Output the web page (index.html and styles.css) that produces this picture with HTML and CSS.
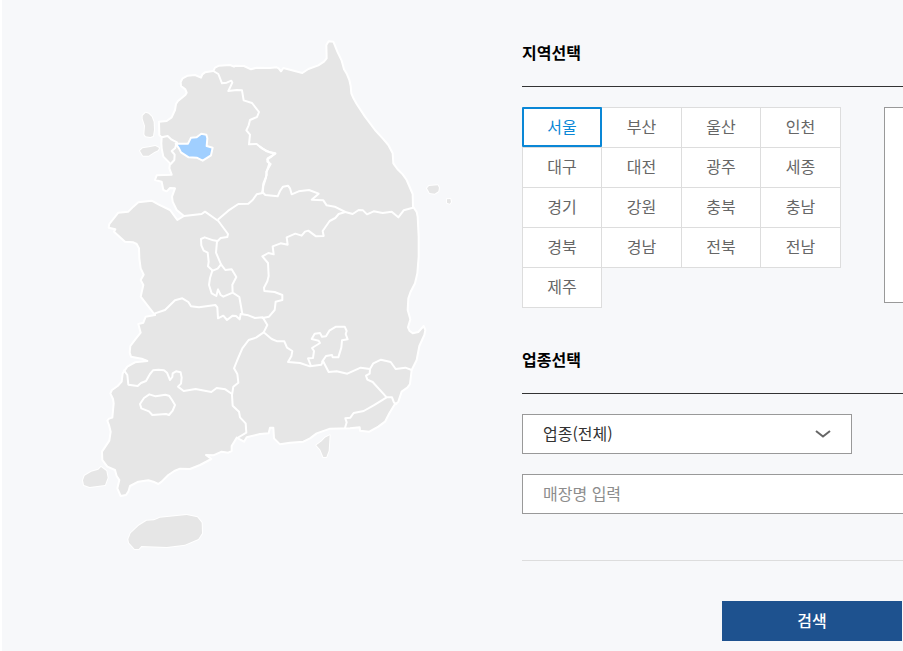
FILE: index.html
```html
<!DOCTYPE html>
<html lang="ko">
<head>
<meta charset="utf-8">
<title>매장 검색</title>
<link rel="stylesheet" href="styles.css">
</head>
<body>
<main class="finder">
  <div class="map">
    <svg class="map-art" viewBox="240 114 1122 1542" aria-hidden="true">
      <g class="land">
        <path d="M477 365L500 363L515 352L525 330L528 312L534 303L556 285L560 278L556 268L543 258L542 246L548 235L563 227L585 225L603 233L607 223L615 217L640 213L645 203L657 197L690 195L702 200L707 197L732 198L753 208L770 203L810 204L830 202L836 205L843 214L850 204L907 219L925 207L955 196L972 185L980 175L979 135L986 124L1000 125L1012 155L1025 182L1032 208L1041 223L1048 240L1052 258L1054 280L1060 294L1070 312L1095 350L1125 390L1148 415L1165 435L1178 460L1180 490L1192 507L1208 523L1220 540L1238 582L1239 620L1250 636L1253 650L1256 710L1256 770L1252 820L1245 850L1232 875L1225 895L1223 930L1231 958L1224 982L1229 993L1238 1000L1255 996L1271 978L1276 990L1273 1005L1258 1038L1250 1080L1235 1110L1230 1152L1222 1163L1205 1175L1195 1205L1183 1215L1168 1240L1155 1265L1135 1280L1108 1295L1080 1292L1079 1282L1050 1285L990 1286L950 1300L930 1315L910 1325L870 1328L840 1333L822 1315L820 1283L810 1283L806 1300L780 1302L740 1312L732 1325L710 1313L695 1338L695 1353L685 1358L665 1355L640 1366L618 1365L634 1377L600 1395L570 1407L540 1406L523 1413L505 1425L485 1445L475 1452L460 1445L445 1441L415 1445L390 1458L385 1475L378 1485L362 1488L352 1465L358 1440L350 1428L345 1410L322 1400L307 1380L306 1355L328 1322L332 1295L327 1275L322 1262L327 1256L337 1253L341 1210L339 1197L331 1180L336 1170L353 1158L365 1145L368 1120L382 1100L405 1087L442 1083L425 1076L393 1070L389 1058L391 1038L406 1018L422 998L415 972L430 968L437 950L465 945L422 890L430 855L422 840L431 824L422 805L418 775L417 745L410 732L400 727L375 725L342 695L346 688L326 683L328 672L355 638L385 635L400 620L415 607L455 602L475 613L510 630L532 660L552 648L530 630L518 605L516 590L525 565L510 564L500 574L490 570L485 545L465 540L470 526L515 524L508 505L510 490L490 470L485 445L484 430L485 412L478 405Z"/>
      </g>
      <g class="land islands">
        <path d="M437 338L446 341L455 350L461 366L462 390L459 408L451 411L437 409L433 403L435 377L428 356L428 347Z"/>
        <path d="M420 452L428 445L447 442L466 438L477 444L474 451L463 456L446 467L429 467Z"/>
        <path d="M303 1401L295 1409L274 1415L254 1427L249 1441L252 1455L269 1461L315 1455L323 1433L319 1413Z"/>
        <path d="M387 1628L385 1618L392 1600L416 1577L440 1562L462 1561L480 1553L560 1545L592 1552L605 1568L606 1600L595 1617L555 1634L500 1641L424 1638L416 1647L404 1647Z"/>
        <path d="M989 1306L975 1313L965 1324L949 1336L961 1349L970 1371L979 1371L986 1352Z"/>
        <path d="M1281 565L1287 558L1313 556L1317 563L1315 574L1304 581L1289 579Z"/>
        <path d="M1341 598L1351 597L1353 606L1349 611L1341 608Z"/>
      </g>
      <path class="seoul" d="M527 431L564 431L573 413L590 412L604 401L619 404L622 415L620 438L638 443L633 466L608 482L590 473L566 472L543 457L537 445Z"/>
      <g class="borders">
        <g transform="translate(210 90)">
          <path d="M430 123L445 132L456 160L470 158L484 152L487 158L475 183L500 180L516 181L521 211L546 219L567 246L561 261L540 270L536 286L529 301L540 314L537 343L560 342L577 356L600 367M600 367L616 370L603 381L592 388L598 401L590 425L588 443L580 468L578 489L560 493L548 510L535 521L505 522L475 542L445 568"/>
          <path d="M275 322L293 318L305 329L321 337L315 355L305 363L314 374L313 390L302 402"/>
        </g>
        <g transform="translate(210 570)">
          <path d="M342 78L395 72L405 65L445 93L474 132L472 141L452 144L443 153L430 151L404 142L393 147L394 166L401 182L413 188L416 215L414 229L428 242L443 236L453 223L438 188L441 154"/>
          <path d="M453 223L466 240L485 238L499 261L487 284L488 308L460 320L452 315L444 298L439 318L425 310L417 285L420 264L427 242M488 308L508 321L517 372"/>
          <path d="M255 375V370L285 360L315 331L337 325L355 336L363 349L387 352L436 345L442 352L444 385L460 377L471 390L488 377L498 378L509 388L512 372L535 376L555 384L578 382L592 405L581 427"/>
          <path d="M581 427L558 443L536 450L517 475L502 510L492 535L502 552L505 578L490 590L486 615L488 647L507 665L510 682L527 700L529 728L502 744"/>
          <path d="M162 541L172 555L175 584L203 588L213 579L228 573L240 552L249 541L265 539L282 541L291 548L300 570L307 561L308 550L318 544L332 547L335 563L333 581L324 590L341 603L377 597L424 606L440 594L466 598L486 612"/>
          <path d="M210 642L222 624L238 613L257 619L286 614L297 617L306 630L315 645L308 662L297 675L288 672L247 675L237 664L214 655Z"/>
        </g>
        <g transform="translate(780 90)">
          <path d="M7 486L16 495L53 499L60 483L69 470L84 467L90 475L95 493L116 484L147 480L176 491L155 509L190 511L200 526L224 530L256 546L278 552L296 540L309 541L321 553L341 544L368 549L395 545L415 562L431 541L459 533"/>
          <path d="M7 486L10 461L20 435L19 425L32 402L22 395L23 385L46 371L20 364L0 350"/>
        </g>
        <g transform="translate(780 570)">
          <path d="M256 66L236 72L226 84L209 93L188 123L191 138L168 139L145 122L135 125L125 137L106 131L80 142L83 164L62 160L38 169L41 193L25 189L7 199L24 219L26 258L22 274L12 293L13 303L44 306L67 315L67 330L47 335L44 360L27 380L8 384"/>
        </g>
        <g transform="translate(690 930)">
          <path d="M101 67L125 87L142 94H163L171 113L187 123L184 139L174 156L210 159L240 169L274 164L279 153L296 186L320 184L352 191L392 173L420 177L430 160L453 149L482 156L497 177L526 173L545 180"/>
          <path d="M243 168L234 145L249 144L252 123L246 114L270 99L266 92L245 87L254 71L270 69L276 80L288 79L298 62L318 50L344 50L350 63L347 72L353 88L336 91L334 113L325 142H308L306 135L288 138L277 154"/>
          <path d="M420 177L419 191L408 197L412 209L428 216L470 262L486 262L492 278L499 282M470 262L431 286L401 303L371 309L361 323L346 325L350 337L345 354"/>
        </g>
      </g>
    </svg>
  </div>

  <form class="panel">
    <section>
      <h2 class="title">지역선택</h2>
      <div class="region">
        <div class="region-grid">
          <button type="button" class="cell cell-on" aria-pressed="true">서울</button>
          <button type="button" class="cell">부산</button>
          <button type="button" class="cell">울산</button>
          <button type="button" class="cell">인천</button>
          <button type="button" class="cell">대구</button>
          <button type="button" class="cell">대전</button>
          <button type="button" class="cell">광주</button>
          <button type="button" class="cell">세종</button>
          <button type="button" class="cell">경기</button>
          <button type="button" class="cell">강원</button>
          <button type="button" class="cell">충북</button>
          <button type="button" class="cell">충남</button>
          <button type="button" class="cell">경북</button>
          <button type="button" class="cell">경남</button>
          <button type="button" class="cell">전북</button>
          <button type="button" class="cell">전남</button>
          <button type="button" class="cell">제주</button>
        </div>
        <div class="district"></div>
      </div>
    </section>
    <section class="category">
      <h2 class="title">업종선택</h2>
      <div class="select-wrap">
        <select class="field" aria-label="업종">
          <option>업종(전체)</option>
        </select>
        <svg class="chevron" viewBox="0 0 16 10" aria-hidden="true"><path d="M1 2L8 7.500L15 2"/></svg>
      </div>
      <input class="field" type="text" placeholder="매장명 입력" aria-label="매장명">
    </section>
    <div class="actions">
      <button type="submit" class="search">검색</button>
    </div>
  </form>
</main>
</body>
</html>
```
FILE: styles.css
```css
* {
  box-sizing: border-box;
}

body {
  margin: 0;
  overflow: hidden;
  background: #f7f8fa;
  color: #333;
  font-family: "Noto Sans CJK KR", "Noto Sans", sans-serif;
  font-size: 16px;
  line-height: 24px;
}

button,
input,
select {
  font: inherit;
}

.finder {
  display: grid;
  grid-template-columns: 520px minmax(580px, 1fr);
  min-height: 100vh;
  overflow: hidden;
  border-left: 2px solid #fff;
}

.map {
  padding: 38px 68px 0 78px;
}

.map-art {
  display: block;
  width: 100%;
}

.land path,
.seoul,
.borders path {
  stroke: #fff;
  stroke-width: 6;
  stroke-linejoin: round;
  stroke-linecap: round;
}

.land path {
  fill: #e6e6e6;
}

.islands path {
  paint-order: stroke;
}

.borders path {
  fill: none;
}

.seoul {
  fill: #a0cfff;
}

.panel {
  padding-top: 40px;
}

.title {
  margin: 0 0 20px;
  padding-bottom: 22px;
  border-bottom: 1px solid #333;
  color: #000;
  font-size: 16px;
  font-weight: 700;
  line-height: 24px;
}

.region {
  display: flex;
  align-items: flex-start;
  gap: 44px;
}

.region-grid {
  display: grid;
  grid-template-columns: 79px 80px 79px 80px;
  grid-auto-rows: 40px;
}

.cell {
  height: 41px;
  margin-right: -1px;
  padding: 0 0 3px;
  border: 1px solid #ddd;
  background: #fff;
  color: #666;
}

.cell-on {
  z-index: 1;
  height: 40px;
  border: 2px solid #0a87d6;
  border-radius: 1px;
  color: #0a87d6;
}

.district {
  flex: 1;
  height: 196px;
  border: 1px solid #999;
  background: #fff;
}

.category {
  margin-top: 40px;
  padding-bottom: 46px;
  border-bottom: 1px solid #ddd;
}

.field {
  display: block;
  width: 100%;
  height: 40px;
  padding: 0 20px 2px;
  border: 1px solid #999;
  border-radius: 0;
  background: #fff;
  color: #333;
}

.field::placeholder {
  color: #8c8c8c;
}

.select-wrap {
  position: relative;
  width: 330px;
  margin-bottom: 20px;
}

.select-wrap .field {
  appearance: none;
}

.chevron {
  position: absolute;
  top: 15px;
  right: 21px;
  width: 16px;
  height: 10px;
  fill: none;
  stroke: #666;
  stroke-width: 2;
  pointer-events: none;
}

.actions {
  display: flex;
  justify-content: center;
  padding: 40px 0 10px;
}

.search {
  width: 180px;
  height: 40px;
  padding: 0 0 3px;
  border: 0;
  background: #1e528f;
  color: #fff;
  font-weight: 500;
}
```
